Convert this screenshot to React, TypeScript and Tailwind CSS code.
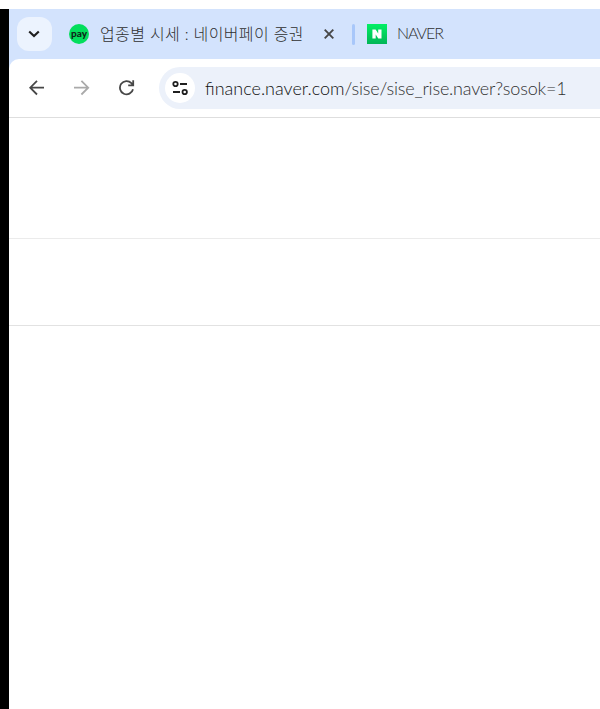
function TabStrip() {
  return (
    <header className="flex h-[50px] items-center bg-[#d3e3fd] pl-2 text-[#303030]">
      <button className="flex h-[34px] w-[35px] shrink-0 items-center justify-center rounded-xl bg-[#ecf3fe]" aria-label="Tabs">
        <svg className="mr-px" width="12" height="8" viewBox="0 0 12 8" fill="none" stroke="#1f1f1f" strokeWidth="2.1">
          <path d="M1.2 1.4 6 6.1l4.8-4.7" />
        </svg>
      </button>
      <span className="ml-[17px] flex size-5 shrink-0 items-center justify-center rounded-full bg-[#03de5c] pb-[2px] font-['Lato','Liberation_Sans',sans-serif] text-[10px] leading-none font-black text-[#10251a]">
        pay
      </span>
      <span className="ml-[11px] w-[203px] shrink-0 pb-px font-['Lato','Noto_Sans_CJK_KR',sans-serif] text-[16px] leading-6 font-light tracking-[0.35px] whitespace-nowrap">
        업종별 시세 : 네이버페이 증권
      </span>
      <svg className="ml-[21px] shrink-0" width="10" height="10" viewBox="0 0 10 10" stroke="#474747" strokeWidth="1.9">
        <path d="m.7.7 8.6 8.6M9.3.7.7 9.3" />
      </svg>
      <span className="ml-[18px] h-[21px] w-[3px] shrink-0 rounded-full bg-[#a8c7fa]" />
      <svg className="ml-3 shrink-0" width="20" height="20" viewBox="0 0 20 20">
        <defs>
          <linearGradient id="naver" x1="0" y1="0" x2="0" y2="1">
            <stop offset="0" stopColor="#02f064" />
            <stop offset="1" stopColor="#02b557" />
          </linearGradient>
        </defs>
        <path fill="url(#naver)" d="M0 0h20v20H0z" />
        <path fill="#fff" d="M5.400 5.500h3.200l2.600 4v-4h3.300v9h-3.200l-2.600-4v4H5.400z" />
      </svg>
      <span className="ml-[10px] pb-[2px] font-['Lato','Liberation_Sans',sans-serif] text-[16px] leading-6 font-light tracking-[-1.1px]">NAVER</span>
    </header>
  );
}

function Toolbar() {
  return (
    <div className="bg-[#d3e3fd]">
      <nav className="flex h-[59px] items-center rounded-tl-[10px] border-b border-[#dedede] bg-white pl-5">
        <svg className="shrink-0" width="16" height="16" viewBox="0 0 16 16" fill="none" stroke="#474747" strokeWidth="1.800">
          <path d="M15 7.700H1.400M8 .900 1.200 7.700 8 14.500" />
        </svg>
        <svg className="ml-[29px] shrink-0" width="16" height="16" viewBox="0 0 16 16" fill="none" stroke="#aaa" strokeWidth="1.800">
          <path d="M0 7.700h14.200M7.400.900l6.800 6.800-6.800 6.800" />
        </svg>
        <svg className="ml-[29px] shrink-0" width="16" height="16" viewBox="0 0 16 16" fill="none" stroke="#474747" strokeWidth="1.800">
          <path d="M14 9.200A6.600 6.600 0 1 1 12.400 3.200L14 4.800M14.200.300v5H9.200" />
        </svg>
        <div className="ml-6 flex h-[42px] min-w-0 flex-1 items-center rounded-l-full bg-[#ecf1fa] pl-1.5">
          <span className="flex size-[30px] shrink-0 items-center justify-center rounded-full bg-white">
            <svg width="18" height="16" viewBox="0 0 18 16" fill="none" stroke="#1f1f1f" strokeWidth="1.800">
              <circle cx="4.500" cy="4" r="2.200" />
              <path d="M9 4h7M2 12h7" />
              <circle cx="13.700" cy="12" r="2.200" />
            </svg>
          </span>
          <span className="ml-[10px] font-['Lato','Liberation_Sans',sans-serif] text-[18px] leading-6 font-light whitespace-nowrap text-[#303030]">
            <span className="text-[#111]">finance.naver.com</span>
            <span className="tracking-[-0.180px]">/sise/sise_rise.naver?sosok=1</span>
          </span>
        </div>
      </nav>
    </div>
  );
}

export default function App() {
  return (
    <div className="h-[709px] w-[600px] overflow-hidden bg-white pt-[9px]">
      <div className="flex h-[700px] flex-col border-l-[9px] border-black">
        <TabStrip />
        <Toolbar />
        <main className="flex-1 bg-white">
          <div className="h-[121px] border-b border-[#ebebeb]" />
          <div className="h-[87px] border-b border-[#e2e2e2]" />
        </main>
      </div>
    </div>
  );
}
